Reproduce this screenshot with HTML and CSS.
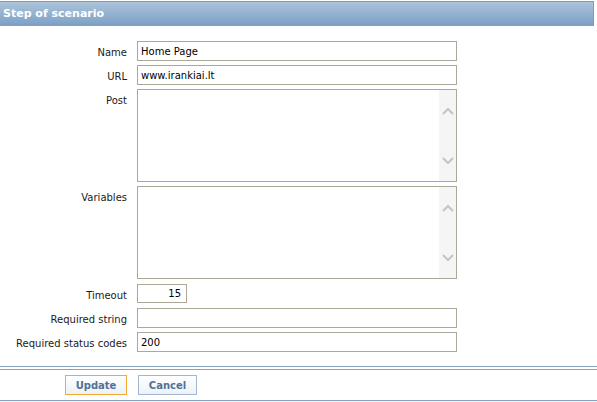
FILE: index.html
```html
<!DOCTYPE html>
<html>
<head>
<meta charset="utf-8">
<link rel="stylesheet" href="styles.css">
</head>
<body>
<div class="header"><span class="title">Step of scenario</span></div>
<div class="form">
  <label class="lbl">Name</label>
  <input class="inp" type="text" value="Home Page">
  <label class="lbl">URL</label>
  <input class="inp" type="text" value="www.irankiai.lt">
  <label class="lbl">Post</label>
  <div class="area">
    <div class="area-text"></div>
    <div class="sbar">
      <svg width="12" height="8" viewBox="0 0 12 8"><path d="M1 7 L6 2 L11 7" fill="none" stroke="#c6c6c6" stroke-width="2.2"/></svg>
      <svg width="12" height="8" viewBox="0 0 12 8"><path d="M1 1 L6 6 L11 1" fill="none" stroke="#c6c6c6" stroke-width="2.2"/></svg>
    </div>
  </div>
  <label class="lbl">Variables</label>
  <div class="area">
    <div class="area-text"></div>
    <div class="sbar">
      <svg width="12" height="8" viewBox="0 0 12 8"><path d="M1 7 L6 2 L11 7" fill="none" stroke="#c6c6c6" stroke-width="2.2"/></svg>
      <svg width="12" height="8" viewBox="0 0 12 8"><path d="M1 1 L6 6 L11 1" fill="none" stroke="#c6c6c6" stroke-width="2.2"/></svg>
    </div>
  </div>
  <label class="lbl lbl-gap">Timeout</label>
  <input class="inp inp-small lbl-gap" type="text" value="15">
  <label class="lbl">Required string</label>
  <input class="inp" type="text" value="">
  <label class="lbl">Required status codes</label>
  <input class="inp" type="text" value="200">
</div>
<div class="footer">
  <div class="footer-inner">
    <button class="btn btn-primary">Update</button>
    <button class="btn">Cancel</button>
  </div>
</div>
<div class="footer-tail"></div>
</body>
</html>
```
FILE: styles.css
```css
html, body {
  margin: 0;
  padding: 0;
  background: #ffffff;
  font-family: "DejaVu Sans", Verdana, sans-serif;
  font-size: 10px;
  color: #1a1a1a;
}

.header {
  margin-top: 1px;
  width: 594px;
  height: 25px;
  box-sizing: border-box;
  border-top: 1px solid #7e99ba;
  border-right: 1px solid #809cbd;
  background: linear-gradient(to bottom, #adc4db 0%, #93b1d0 50%, #7a9fc5 100%);
  display: flex;
  align-items: center;
  padding-left: 3px;
}

.title {
  color: #ffffff;
  font-weight: bold;
  font-size: 11px;
  line-height: 24px;
}

.form {
  display: grid;
  grid-template-columns: 127px 320px;
  column-gap: 10px;
  row-gap: 4px;
  padding-top: 15px;
  align-items: start;
}

.lbl {
  box-sizing: border-box;
  text-align: right;
  line-height: 20px;
  height: 20px;
  padding-top: 2px;
  white-space: nowrap;
  color: #1a1a1a;
}

.inp {
  box-sizing: border-box;
  width: 320px;
  height: 20px;
  margin: 0;
  border: 1px solid #aba897;
  padding: 0 3px;
  font-family: "DejaVu Sans", Verdana, sans-serif;
  font-size: 10px;
  color: #000;
  background: #fff;
  outline: none;
}

.inp-small {
  width: 50px;
  height: 19px;
  text-align: right;
  padding-right: 5px;
}

.lbl-gap {
  margin-top: 1px;
}

.area {
  box-sizing: border-box;
  width: 320px;
  height: 93px;
  border: 1px solid #aba897;
  display: flex;
  background: #fff;
}

.area-text {
  flex: 1;
}

.sbar {
  width: 17px;
  background: #f5f5f5;
  display: flex;
  flex-direction: column;
  justify-content: space-between;
  align-items: center;
  padding: 17px 0 16px;
  box-sizing: border-box;
}

.sbar svg {
  display: block;
}

.footer {
  margin-top: 14px;
  border-top: 1px solid #87a1c0;
  padding-top: 2px;
}

.footer-inner {
  border-top: 1px solid #87a1c0;
  border-bottom: 1px solid #87a1c0;
  padding: 5px 0 5px 65px;
  display: flex;
  gap: 11px;
}

.btn {
  box-sizing: border-box;
  height: 20px;
  width: 59px;
  margin: 0;
  padding: 0;
  border: 1px solid #a2b6cd;
  background: linear-gradient(to bottom, #ffffff, #edf2f7);
  font-family: "DejaVu Sans", Verdana, sans-serif;
  font-size: 10px;
  font-weight: bold;
  color: #4f7299;
}

.btn-primary {
  width: 62px;
  border-color: #f6a830;
}

.footer-tail {
  height: 3px;
  background: #eef1f5;
}
```
